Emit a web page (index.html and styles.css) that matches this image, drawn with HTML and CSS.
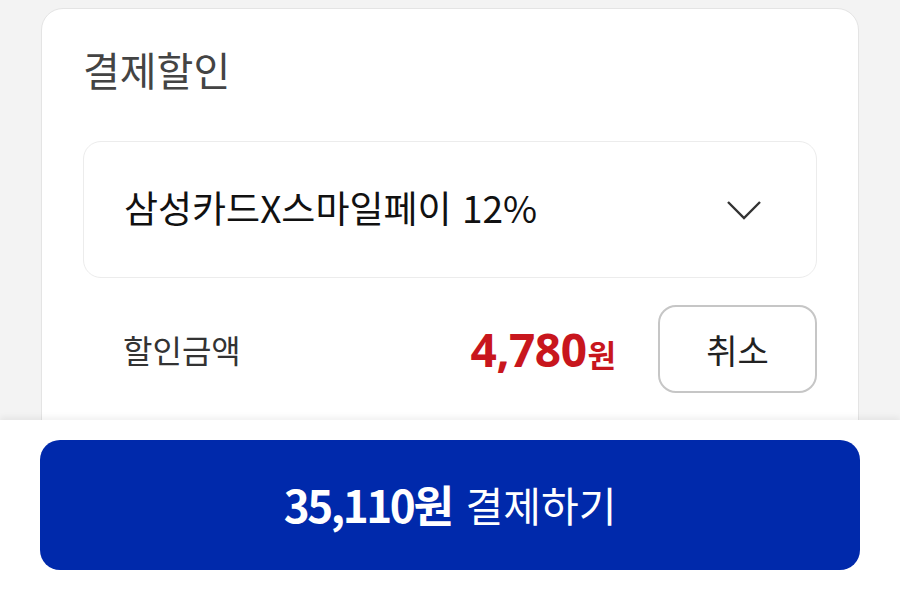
FILE: index.html
```html
<!DOCTYPE html>
<html lang="ko">
<head>
<meta charset="utf-8">
<link rel="stylesheet" href="styles.css">
</head>
<body>
<div class="page">
  <div class="scroll">
    <section class="card">
      <h2 class="title">결제할인</h2>
      <div class="select">
        <span class="select-text">삼성카드X스마일페이 12%</span>
        <svg class="chev" width="36" height="20" viewBox="0 0 36 20"><path d="M2 2 L18 18 L34 2" fill="none" stroke="#333" stroke-width="2.4"/></svg>
      </div>
      <div class="row">
        <span class="label">할인금액</span>
        <span class="amount"><span class="num">4,780</span><span class="won">원</span></span>
        <button class="cancel">취소</button>
      </div>
    </section>
  </div>
  <footer class="bottom">
    <button class="pay"><span class="pay-num">35,110원</span><span class="pay-txt">결제하기</span></button>
  </footer>
</div>
</body>
</html>
```
FILE: styles.css
```css
* { box-sizing: border-box; }
html, body { margin: 0; padding: 0; }
body {
  width: 900px;
  height: 590px;
  overflow: hidden;
  background: #f3f3f3;
  font-family: "Noto Sans CJK KR", "Noto Sans", sans-serif;
}
.page {
  display: flex;
  flex-direction: column;
  height: 590px;
}
.scroll {
  height: 420px;
  overflow: hidden;
  padding: 8px 41px 0 41px;
}
.card {
  background: #fff;
  border: 1.5px solid #e4e4e4;
  border-radius: 22px;
  height: 500px;
  padding: 32px 41px 0 41px;
}
.title {
  margin: 0;
  font-size: 40px;
  font-weight: 400;
  color: #444;
  line-height: 56px;
  letter-spacing: 0;
}
.select {
  margin-top: 44px;
  height: 137px;
  border: 1.5px solid #ececec;
  border-radius: 18px;
  display: flex;
  align-items: center;
  justify-content: space-between;
  padding: 0 54px 0 40px;
}
.select-text {
  font-size: 37px;
  color: #111;
  letter-spacing: 0;
  line-height: 1;
  margin-top: -4px;
}
.chev { display: block; }
.row {
  margin-top: 27px;
  display: flex;
  align-items: center;
  padding-left: 40px;
}
.label {
  font-size: 32px;
  color: #333;
  flex: 1;
  letter-spacing: 0;
}
.amount {
  color: #c8161d;
  font-weight: 700;
  display: flex;
  align-items: baseline;
  margin-right: 42px;
}
.num {
  font-family: "Noto Sans", sans-serif;
  font-size: 46px;
  letter-spacing: -0.5px;
}
.won {
  font-size: 31px;
  margin-left: 1px;
}
.cancel {
  width: 159px;
  height: 88px;
  border: 2px solid #c6c6c6;
  border-radius: 18px;
  background: #fff;
  font-family: inherit;
  font-size: 34px;
  color: #222;
  padding: 0;
}
.bottom {
  position: relative;
  z-index: 1;
  flex: 1;
  background: #fff;
  box-shadow: 0 -3px 6px rgba(0,0,0,0.06);
  padding: 20px 40px 0 40px;
}
.pay {
  width: 820px;
  height: 130px;
  border: none;
  border-radius: 20px;
  background: #0029ab;
  color: #fff;
  display: flex;
  align-items: center;
  justify-content: center;
  font-family: inherit;
  padding: 0 0 2px 0;
}
.pay-num {
  font-size: 44px;
  font-weight: 700;
  letter-spacing: -2.4px;
  margin-right: 14px;
}
.pay-txt {
  font-size: 41px;
  font-weight: 400;
  letter-spacing: 0;
}
```
